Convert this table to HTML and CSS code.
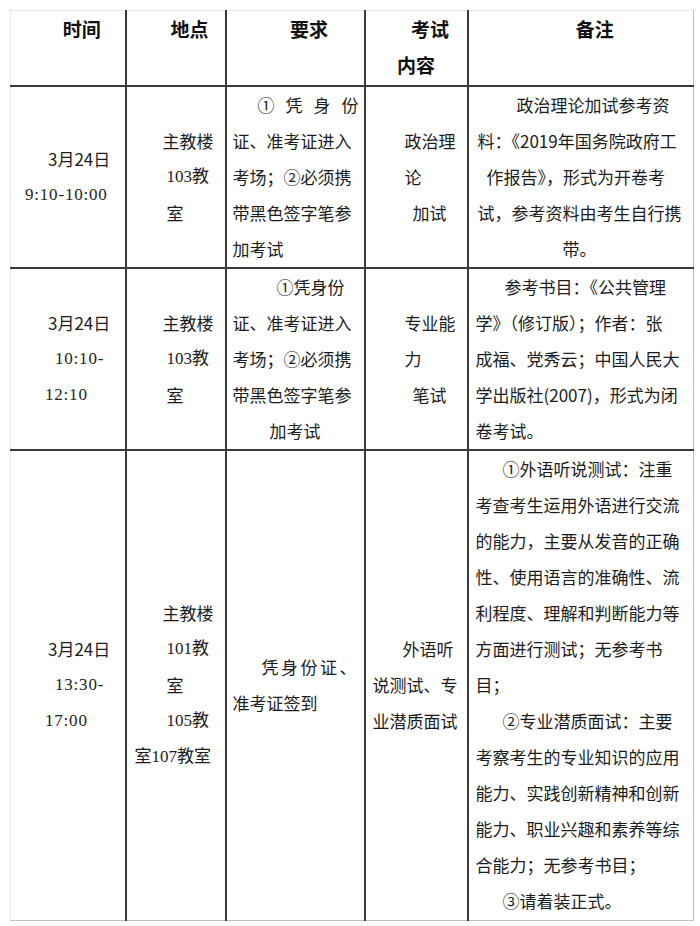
FILE: index.html
```html
<!DOCTYPE html>
<html lang="zh-CN">
<head>
<meta charset="utf-8">
<title>考试安排</title>
<link rel="stylesheet" href="styles.css">
</head>
<body>
<table class="schedule">
  <colgroup>
    <col class="c-time"><col class="c-place"><col class="c-req"><col class="c-content"><col class="c-note">
  </colgroup>
  <thead>
    <tr class="head">
      <th class="first">时间</th>
      <th>地点</th>
      <th>要求</th>
      <th>考试<br>内容</th>
      <th class="last">备注</th>
    </tr>
  </thead>
  <tbody>
    <tr class="r1">
      <td class="first time">
        <div class="ln i37">3月24日</div>
        <div class="ln serif clock i14">9:10-10:00</div>
      </td>
      <td class="place">
        <div class="ln i36">主教楼</div>
        <div class="ln serif i40">103教</div>
        <div class="ln i40">室</div>
      </td>
      <td class="req">
        <div class="ln i31 spread">①凭身份</div>
        <div class="ln i6">证、准考证进入</div>
        <div class="ln i6">考场；②必须携</div>
        <div class="ln i6">带黑色签字笔参</div>
        <div class="ln i6">加考试</div>
      </td>
      <td class="content">
        <div class="ln i39">政治理</div>
        <div class="ln i39">论</div>
        <div class="ln i47">加试</div>
      </td>
      <td class="last note">
        <div class="ln i48">政治理论加试参考资</div>
        <div class="ln i9">料：《2019年国务院政府工</div>
        <div class="ln i18">作报告》，形式为开卷考</div>
        <div class="ln i9">试，参考资料由考生自行携</div>
        <div class="ln i94">带。</div>
      </td>
    </tr>
    <tr class="r2">
      <td class="first time">
        <div class="ln i37">3月24日</div>
        <div class="ln serif clock i44">10:10-</div>
        <div class="ln serif clock i34">12:10</div>
      </td>
      <td class="place">
        <div class="ln i36">主教楼</div>
        <div class="ln serif i40">103教</div>
        <div class="ln i40">室</div>
      </td>
      <td class="req">
        <div class="ln i50">①凭身份</div>
        <div class="ln i6">证、准考证进入</div>
        <div class="ln i6">考场；②必须携</div>
        <div class="ln i6">带黑色签字笔参</div>
        <div class="ln i43">加考试</div>
      </td>
      <td class="content">
        <div class="ln i39">专业能</div>
        <div class="ln i39">力</div>
        <div class="ln i47">笔试</div>
      </td>
      <td class="last note">
        <div class="ln i36">参考书目：《公共管理</div>
        <div class="ln i7">学》（修订版）；作者：张</div>
        <div class="ln i7">成福、党秀云；中国人民大</div>
        <div class="ln i7">学出版社(2007)，形式为闭</div>
        <div class="ln i7">卷考试。</div>
      </td>
    </tr>
    <tr class="r3">
      <td class="first time bottom">
        <div class="ln i37">3月24日</div>
        <div class="ln serif clock i44">13:30-</div>
        <div class="ln serif clock i34">17:00</div>
      </td>
      <td class="place bottom">
        <div class="ln i36">主教楼</div>
        <div class="ln serif i40">101教</div>
        <div class="ln i40">室</div>
        <div class="ln serif i40">105教</div>
        <div class="ln serif i8">室107教室</div>
      </td>
      <td class="req bottom">
        <div class="ln i35 loose">凭身份证、</div>
        <div class="ln i6">准考证签到</div>
      </td>
      <td class="content bottom">
        <div class="ln i37">外语听</div>
        <div class="ln i7">说测试、专</div>
        <div class="ln i7">业潜质面试</div>
      </td>
      <td class="last note bottom">
        <div class="ln i34">①外语听说测试：注重</div>
        <div class="ln i7">考查考生运用外语进行交流</div>
        <div class="ln i7">的能力，主要从发音的正确</div>
        <div class="ln i7">性、使用语言的准确性、流</div>
        <div class="ln i7">利程度、理解和判断能力等</div>
        <div class="ln i7">方面进行测试；无参考书</div>
        <div class="ln i7">目；</div>
        <div class="ln i34">②专业潜质面试：主要</div>
        <div class="ln i7">考察考生的专业知识的应用</div>
        <div class="ln i7">能力、实践创新精神和创新</div>
        <div class="ln i7">能力、职业兴趣和素养等综</div>
        <div class="ln i7">合能力；无参考书目；</div>
        <div class="ln i34">③请着装正式。</div>
      </td>
    </tr>
  </tbody>
</table>
</body>
</html>
```

FILE: styles.css
```css
html, body {
  margin: 0;
  padding: 0;
  background: #ffffff;
}

body {
  font-family: "Noto Sans CJK SC", "Noto Sans", sans-serif;
  font-size: 17px;
  color: #1c1c1c;
}

.schedule {
  margin: 10px 0 0 10px;
  border-collapse: collapse;
  table-layout: fixed;
  width: 683px;
}

.c-time { width: 115px; }
.c-place { width: 100px; }
.c-req { width: 139px; }
.c-content { width: 103px; }
.c-note { width: 226px; }

.schedule th,
.schedule td {
  border: 2px solid #3a3a3a;
  padding: 0;
  line-height: 36px;
}

.schedule th {
  font-size: 19px;
  font-weight: bold;
  color: #111;
  text-align: center;
  text-indent: 28px;
  vertical-align: top;
  border-top: 1px solid #e6e6e6;
}

.schedule td {
  text-align: left;
  vertical-align: middle;
}

.schedule .first { border-left: 1px solid #e8e8e8; }
.schedule .last { border-right: 1px solid #bdbdbd; }
.schedule .bottom { border-bottom: 1px solid #bdbdbd; }

.head { height: 75px; }
.r1 { height: 181px; }
.r2 { height: 182px; }
.r3 { height: 471px; }

.ln {
  white-space: nowrap;
  line-height: 36px;
}

.serif {
  font-family: "Liberation Serif", "Noto Sans CJK SC", serif;
}

.clock { letter-spacing: 0.8px; }

.spread { letter-spacing: 11px; }
.loose { letter-spacing: 2.5px; }

.i6 { margin-left: 6px; }
.i7 { margin-left: 7px; }
.i8 { margin-left: 8px; }
.i9 { margin-left: 9px; }
.i14 { margin-left: 14px; }
.i18 { margin-left: 18px; }
.i31 { margin-left: 31px; }
.i34 { margin-left: 34px; }
.i35 { margin-left: 35px; }
.i36 { margin-left: 36px; }
.i37 { margin-left: 37px; }
.i39 { margin-left: 39px; }
.i40 { margin-left: 40px; }
.i43 { margin-left: 43px; }
.i44 { margin-left: 44px; }
.i47 { margin-left: 47px; }
.i48 { margin-left: 48px; }
.i50 { margin-left: 50px; }
.i94 { margin-left: 94px; }
```
